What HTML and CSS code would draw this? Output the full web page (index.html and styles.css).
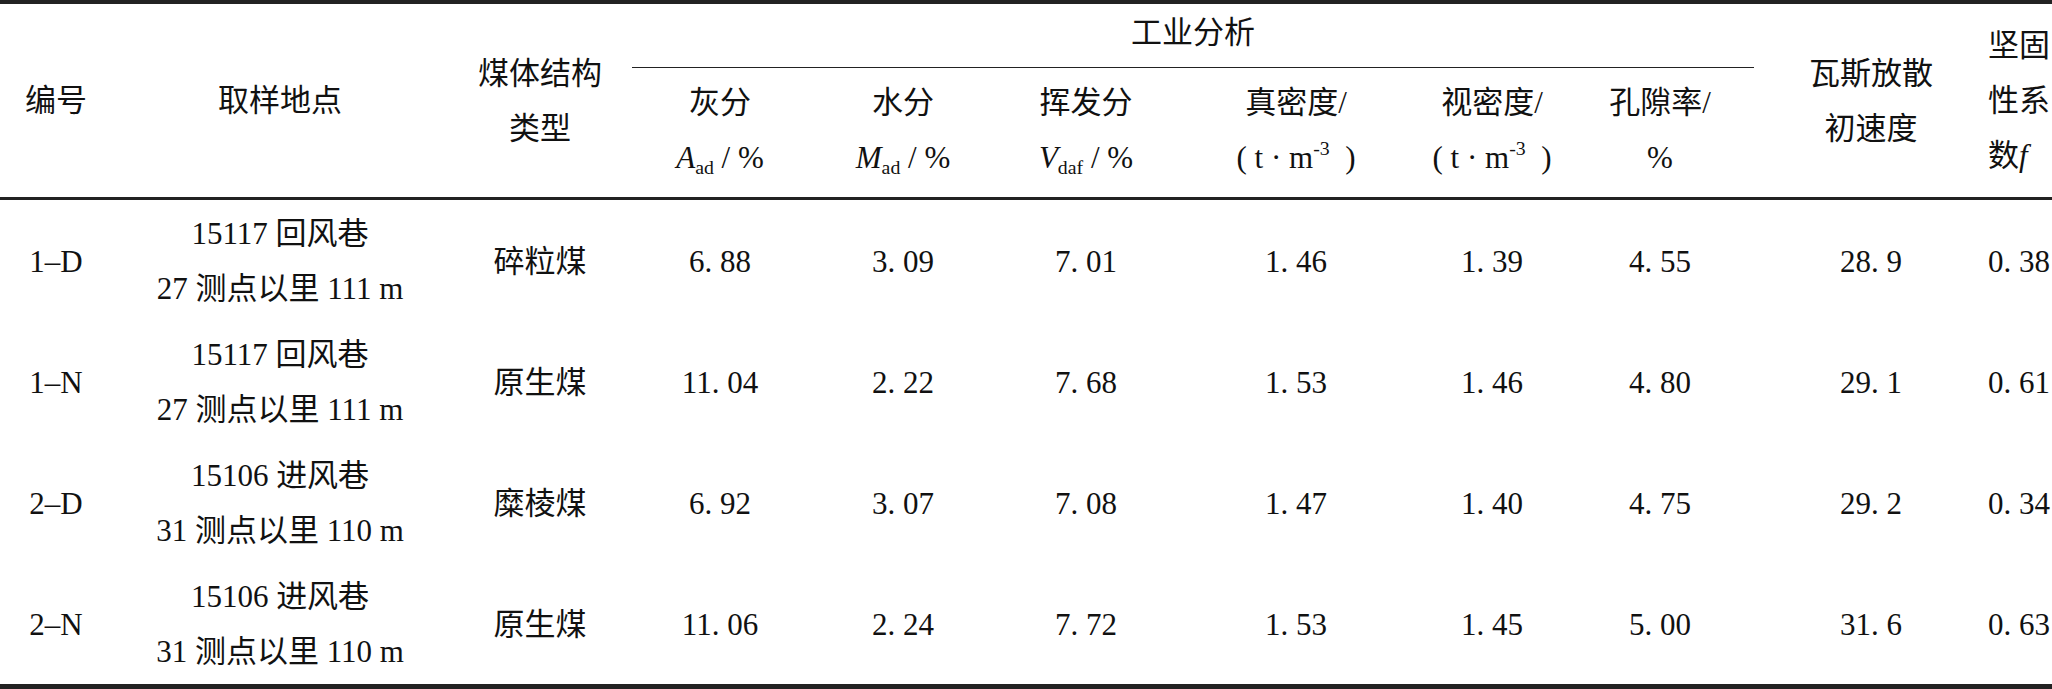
FILE: index.html
```html
<!DOCTYPE html>
<html>

<head>
  <meta charset="utf-8">
  <link rel="stylesheet" href="styles.css">
</head>

<body>

  <table class="data-table">
    <colgroup>
      <col class="col-id">
      <col class="col-site">
      <col class="col-type">
      <col class="col-ash">
      <col class="col-water">
      <col class="col-volatile">
      <col class="col-true">
      <col class="col-apparent">
      <col class="col-porosity">
      <col class="col-gas">
      <col class="col-f">
    </colgroup>
    <thead>
      <tr class="head-top">
        <th rowspan="2" class="head-span">编号</th>
        <th rowspan="2" class="head-span">取样地点</th>
        <th rowspan="2" class="head-span">煤体结构<br>类型</th>
        <th colspan="6" class="head-group">工业分析</th>
        <th rowspan="2" class="head-span">瓦斯放散<br>初速度</th>
        <th rowspan="2" class="head-span head-last">坚固<br>性系<br>数<i>f</i></th>
      </tr>
      <tr class="head-sub">
        <th>灰分<br><i>A</i><sub>ad</sub> / %</th>
        <th>水分<br><i>M</i><sub>ad</sub> / %</th>
        <th>挥发分<br><i>V</i><sub>daf</sub> / %</th>
        <th>真密度/<br>( t · m<sup>-3</sup>&ensp;)</th>
        <th>视密度/<br>( t · m<sup>-3</sup>&ensp;)</th>
        <th>孔隙率/<br>%</th>
      </tr>
    </thead>
    <tbody>
      <tr>
        <td>1–D</td>
        <td>15117 回风巷<br>27 测点以里 111 m</td>
        <td>碎粒煤</td>
        <td>6.&#x2005;88</td>
        <td>3.&#x2005;09</td>
        <td>7.&#x2005;01</td>
        <td>1.&#x2005;46</td>
        <td>1.&#x2005;39</td>
        <td>4.&#x2005;55</td>
        <td>28.&#x2005;9</td>
        <td class="cell-last">0.&#x2005;38</td>
      </tr>
      <tr>
        <td>1–N</td>
        <td>15117 回风巷<br>27 测点以里 111 m</td>
        <td>原生煤</td>
        <td>11.&#x2005;04</td>
        <td>2.&#x2005;22</td>
        <td>7.&#x2005;68</td>
        <td>1.&#x2005;53</td>
        <td>1.&#x2005;46</td>
        <td>4.&#x2005;80</td>
        <td>29.&#x2005;1</td>
        <td class="cell-last">0.&#x2005;61</td>
      </tr>
      <tr>
        <td>2–D</td>
        <td>15106 进风巷<br>31 测点以里 110 m</td>
        <td>糜棱煤</td>
        <td>6.&#x2005;92</td>
        <td>3.&#x2005;07</td>
        <td>7.&#x2005;08</td>
        <td>1.&#x2005;47</td>
        <td>1.&#x2005;40</td>
        <td>4.&#x2005;75</td>
        <td>29.&#x2005;2</td>
        <td class="cell-last">0.&#x2005;34</td>
      </tr>
      <tr class="row-last">
        <td>2–N</td>
        <td>15106 进风巷<br>31 测点以里 110 m</td>
        <td>原生煤</td>
        <td>11.&#x2005;06</td>
        <td>2.&#x2005;24</td>
        <td>7.&#x2005;72</td>
        <td>1.&#x2005;53</td>
        <td>1.&#x2005;45</td>
        <td>5.&#x2005;00</td>
        <td>31.&#x2005;6</td>
        <td class="cell-last">0.&#x2005;63</td>
      </tr>
    </tbody>
  </table>

</body>

</html>
```

FILE: styles.css
```css
body {
  margin: 0;
  background-color: white;
  overflow: hidden;
}

.data-table {
  width: 2052px;
  table-layout: fixed;
  border-collapse: separate;
  border-spacing: 0;
  font-family: "Liberation Serif", "Noto Sans CJK SC", serif;
  font-size: 31px;
  color: #111;
}

.col-id { width: 112px; }
.col-site { width: 336px; }
.col-type { width: 184px; }
.col-ash { width: 176px; }
.col-water { width: 190px; }
.col-volatile { width: 176px; }
.col-true { width: 244px; }
.col-apparent { width: 148px; }
.col-porosity { width: 188px; }
.col-gas { width: 234px; }
.col-f { width: 64px; }

th,
td {
  padding: 0;
  font-weight: normal;
  text-align: center;
  vertical-align: middle;
  white-space: nowrap;
  line-height: 55px;
}

i {
  font-style: italic;
}

sub,
sup {
  font-size: 0.64em;
  line-height: 0;
}

sub {
  vertical-align: -0.3em;
}

sup {
  vertical-align: 0.65em;
}

/* header */
.head-top th {
  border-top: 4px solid #222;
}

.head-span {
  border-bottom: 3px solid #222;
}

.head-last {
  text-align: left;
  padding-left: 0;
}

.head-group {
  line-height: 40px;
  padding: 9px 0 14px;
  border-bottom: 1px solid #222;
}

.head-sub th {
  padding: 7px 0 12px;
  border-bottom: 3px solid #222;
}

/* body */
tbody td {
  padding: 6px 0 5px;
  height: 110px;
}

.cell-last {
  text-align: left;
}

.row-last td {
  border-bottom: 5px solid #222;
}
```
